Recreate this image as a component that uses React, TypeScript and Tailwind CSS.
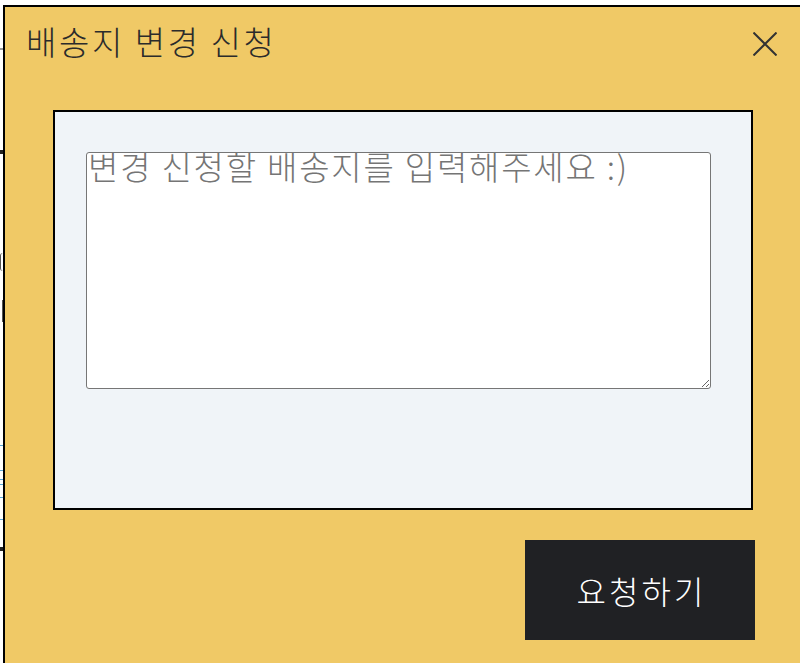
import React from "react";

export default function App() {
  const font = { fontFamily: '"Noto Sans CJK KR", "Noto Sans", sans-serif' };
  return (
    <div className="relative w-[800px] h-[663px] overflow-hidden bg-white" style={font}>
      {/* underlying page fragments peeking out on the left */}
      <div className="flex flex-col w-[3px]">
        <div className="mt-[48px] h-[2px] bg-[#9a9a9a]" />
        <div className="mt-[100px] h-[4px] bg-[#222]" />
        <div className="mt-[99px] h-[18px] border-l border-[#555] rounded-l-full" />
        <div className="mt-[29px] h-[22px] border-r border-[#555]" />
        <div className="mt-[123px] h-[1px] bg-[#5aa7d6]" />
        <div className="mt-[24px] h-[1px] bg-[#5aa7d6]" />
        <div className="mt-[8px] h-[1px] bg-[#5aa7d6]" />
        <div className="mt-[4px] h-[1px] bg-[#5aa7d6]" />
        <div className="mt-[12px] h-[1px] bg-[#5aa7d6]" />
        <div className="mt-[21px] h-[1px] bg-[#5aa7d6]" />
        <div className="mt-[27px] h-[4px] bg-[#222]" />
      </div>

      {/* modal window over the page */}
      <div className="absolute left-[3px] top-[5px] w-[800px] h-[700px] border-2 border-black bg-[#F0C966] flex flex-col">
        <div className="flex justify-between h-[103px]">
          <h1 className="pl-[21px] pt-[14px] text-[33px] leading-[40px] tracking-[2.6px] text-[#2b2b2b] font-light">
            배송지 변경 신청
          </h1>
          <button className="mr-[24px] mt-[25px] w-[24px] h-[24px] self-start">
            <svg width="24" height="24" viewBox="0 0 24 24">
              <path d="M0.5 0.5 L23.5 23.5 M23.5 0.5 L0.5 23.5" stroke="#333" strokeWidth="2" fill="none" />
            </svg>
          </button>
        </div>
        <div className="ml-[48px] w-[700px] h-[400px] border-2 border-black bg-[#F0F4F8] pl-[31px] pt-[40px]">
          <textarea
            className="block w-[625px] h-[237px] bg-white border border-[#767676] rounded-[3px] px-[1px] py-[2px] text-[33px] leading-[22px] tracking-[1.8px] font-light text-black placeholder:text-[#757575] outline-none resize"
            style={font}
            placeholder="변경 신청할 배송지를 입력해주세요 :)"
          />
        </div>
        <div className="flex justify-end pr-[46px] mt-[30px]">
          <button className="w-[230px] h-[100px] bg-[#202124] text-white text-[32px] leading-none tracking-[3px] pl-[3px] font-light">
            요청하기
          </button>
        </div>
      </div>
    </div>
  );
}
